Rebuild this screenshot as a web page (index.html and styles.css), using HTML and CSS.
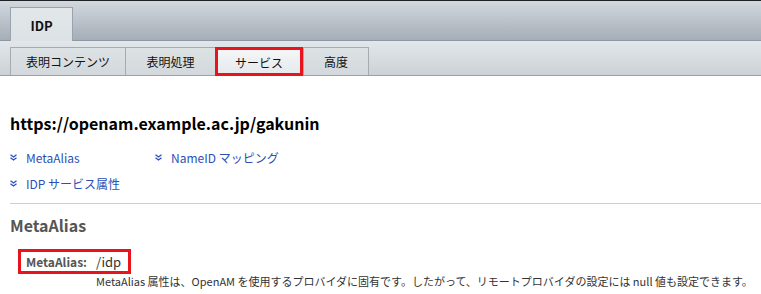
FILE: index.html
```
<!DOCTYPE html>
<html lang="ja">
<head>
<meta charset="utf-8">
<link rel="stylesheet" href="styles.css">
</head>
<body>
<div class="topbar">
  <div class="tab-main">IDP</div>
</div>
<div class="subbar">
  <div class="subtab t1">表明コンテンツ</div>
  <div class="subtab t2">表明処理</div>
  <div class="subtab t3 selected">サービス</div>
  <div class="subtab t4">高度</div>
</div>
<div class="content">
  <h1 class="title">https://openam.example.ac.jp/gakunin</h1>
  <div class="links">
    <div class="link-row">
      <a class="jump l1"><svg class="chev" width="7" height="7" viewBox="0 0 7 7"><path d="M0.5 0.8 L3.5 3 L6.5 0.8 M0.5 3.8 L3.5 6 L6.5 3.8" fill="none" stroke="#2d50c8" stroke-width="1.4"/></svg>MetaAlias</a>
      <a class="jump"><svg class="chev" width="7" height="7" viewBox="0 0 7 7"><path d="M0.5 0.8 L3.5 3 L6.5 0.8 M0.5 3.8 L3.5 6 L6.5 3.8" fill="none" stroke="#2d50c8" stroke-width="1.4"/></svg>NameID マッピング</a>
    </div>
    <div class="link-row">
      <a class="jump"><svg class="chev" width="7" height="7" viewBox="0 0 7 7"><path d="M0.5 0.8 L3.5 3 L6.5 0.8 M0.5 3.8 L3.5 6 L6.5 3.8" fill="none" stroke="#2d50c8" stroke-width="1.4"/></svg>IDP サービス属性</a>
    </div>
  </div>
  <div class="divider"></div>
  <h2 class="section">MetaAlias</h2>
  <div class="field">
    <div class="field-box"><span class="label">MetaAlias:</span><span class="value">/idp</span></div>
    <div class="help">MetaAlias 属性は、OpenAM を使用するプロバイダに固有です。したがって、リモートプロバイダの設定には null 値も設定できます。</div>
  </div>
</div>
</body>
</html>
```
FILE: styles.css
```
* { box-sizing: border-box; }
html, body { margin: 0; padding: 0; }
body {
  font-family: "Noto Sans CJK JP", "Noto Sans", sans-serif;
  background: #fff;
  color: #000;
  width: 761px;
  height: 294px;
  overflow: hidden;
}
.topbar {
  height: 41px;
  border-top: 1px solid #1e2226;
  background: linear-gradient(#d2d8de, #a5adb7);
  border-bottom: 1px solid #8d98a3;
  display: flex;
  align-items: flex-end;
  padding-left: 10px;
}
.tab-main {
  width: 63px;
  height: 34px;
  margin-bottom: -1px;
  background: linear-gradient(#e3e7ea, #dce2e6);
  border: 1px solid #9aa3ad;
  border-bottom: none;
  font-weight: bold;
  font-size: 13px;
  display: flex;
  align-items: center;
  justify-content: center;
  padding-top: 1px;
  color: #111;
}
.subbar {
  height: 35px;
  background: linear-gradient(#e1e7ea, #ccd1d5);
  border-bottom: 1px solid #98a0a8;
  display: flex;
  align-items: flex-end;
  padding-left: 10px;
}
.subtab {
  height: 28px;
  border: 1px solid #a3abb3;
  border-bottom: none;
  border-right: none;
  background: linear-gradient(#dde2e5, #d3d8dc);
  font-size: 12px;
  color: #111;
  display: flex;
  align-items: center;
  justify-content: center;
}
.t1 { width: 115px; }
.t2 { width: 90px; }
.t3 { width: 88px; }
.t4 { width: 66px; border-right: 1px solid #a3abb3; }
.subtab.selected {
  border: 3px solid #e8141c;
  border-bottom: 3px solid #e8141c;
  background: linear-gradient(#f4f6f7, #e6eaec);
  height: 29px;
  margin-bottom: -1px;
  padding-top: 1px;
}
.content { padding: 0 0 0 10px; }
.title {
  margin: 0;
  padding-top: 34px;
  font-size: 16px;
  line-height: 26px;
  font-weight: bold;
  color: #000;
}
.links { margin-top: 8px; }
.link-row { display: flex; height: 26px; align-items: center; }
.jump {
  display: flex;
  align-items: center;
  color: #2c4fb5;
  font-size: 12px;
  text-decoration: none;
}
.jump.l1 { width: 145px; }
.chev { margin-right: 9px; }
.divider {
  margin-top: 7px;
  height: 1px;
  background: #cfcfcf;
}
.section {
  margin: 0;
  padding-top: 9px;
  font-size: 16px;
  line-height: 24px;
  font-weight: bold;
  color: #555;
}
.field { margin-top: 11px; padding-left: 8px; }
.field-box {
  display: inline-flex;
  align-items: center;
  width: 113px;
  height: 25px;
  border: 3px solid #e8141c;
  padding-left: 5px;
  font-size: 12px;
}
.label { font-weight: bold; color: #555; width: 70px; }
.value { color: #333; font-size: 13px; }
.help {
  padding-left: 78px;
  font-size: 11px;
  color: #333;
  line-height: 14px;
}
```
